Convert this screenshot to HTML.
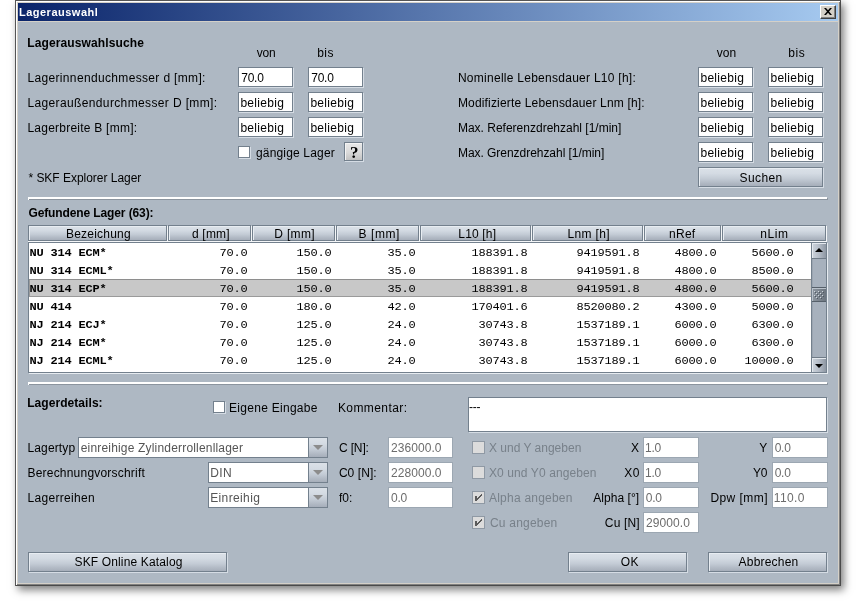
<!DOCTYPE html>
<html lang="de"><head><meta charset="utf-8"><title>Lagerauswahl</title>
<style>
html,body{margin:0;padding:0;background:#fff;}
body{width:856px;height:601px;overflow:hidden;position:relative;font-family:"Liberation Sans",sans-serif;font-size:12px;color:#000;}
#win{position:absolute;left:15px;top:0;width:826px;height:586px;background:#aeb8c3;box-shadow:inset 1px 1px 0 #555,inset -1px -1px 0 #4a4a4a,inset 2px 2px 0 #fff,inset -2px -2px 0 #808080,inset 3px 3px 0 #d4d0c8,inset -3px -3px 0 #d4d0c8,3px 4px 8px rgba(0,0,0,.5);}
#title{position:absolute;left:3px;top:3px;width:820px;height:18px;background:linear-gradient(to right,#0a246a,#a6caf0);border-bottom:1px solid #d4d0c8;}
#close{position:absolute;left:802px;top:2px;width:14px;height:12px;background:#d4d0c8;border:1px solid;border-color:#fff #404040 #404040 #fff;box-shadow:inset -1px -1px 0 #808080;}
#close svg{position:absolute;left:3px;top:2px}
#c{position:absolute;left:0;top:0;width:856px;height:601px;will-change:transform}
.t{position:absolute;line-height:14px;height:14px;white-space:pre;letter-spacing:0.27px}
.bold{font-weight:bold;letter-spacing:0}
.ttl{color:#fff;font-weight:bold;font-size:11px;letter-spacing:0.1px}
.sm{font-size:11px}
.m{font-family:"Liberation Mono",monospace;letter-spacing:-0.2px;transform:scaleY(0.87);transform-origin:0 9.5px}
.mb{font-weight:bold}
.f{position:absolute;background:#fff;border:1px solid #73808d;box-shadow:1px 1px 0 #d5dce4;}
.fd{border-color:#9ca7b2;box-shadow:none}
.b{position:absolute;border:1px solid #73808d;box-shadow:1px 1px 0 #d5dce4, inset 1px 1px 0 #e8edf2;background:linear-gradient(to bottom,#dbe1e8 0%,#d4dbe3 30%,#c3cbd5 60%,#b0b8c3 85%,#a6aeba 100%);}
.q{font-family:"Liberation Serif",serif;font-weight:bold;font-size:17px;letter-spacing:0}
.bq{background:linear-gradient(to bottom,#e9e9e9,#dadada 55%,#c3c3c3);box-shadow:1px 1px 0 #d5dce4, inset 1px 1px 0 #f4f4f4}
.cb{position:absolute;width:10px;height:10px;background:#fff;border:1px solid #73808d;box-shadow:1px 1px 0 #d5dce4;}
.cb.dis{background:#dcdcdc;border-color:#8f99a4;width:11px;height:11px;box-shadow:none}
.cb svg{position:absolute;left:-1px;top:-1px}
.sep{position:absolute;left:28px;width:799px;height:3px;background:#fff}
.sep:after{content:"";position:absolute;left:1px;top:2px;width:799px;height:1px;background:#8b949e}
.sep:before{content:"";position:absolute;left:799px;top:1px;width:1px;height:2px;background:#8b949e}
.combo{box-shadow:none}
.arrow{position:absolute;right:0;top:0;bottom:0;width:18px;border-left:1px solid #73808d;background:linear-gradient(to bottom,#dbe1e8 0%,#d4dbe3 30%,#c3cbd5 60%,#b0b8c3 85%,#a6aeba 100%)}
.arrow svg{position:absolute;left:4px;top:7px}
#sp{position:absolute;left:28px;top:242px;width:797px;height:129px;border:1px solid #73808d;box-shadow:1px 1px 0 #e6ebf0;background:#aeb8c3}
.th{position:absolute;top:225px;height:14px;border:1px solid #73808d;box-shadow:1px 1px 0 #f4f6f8, inset 1px 1px 0 #e8edf2;background:linear-gradient(to bottom,#dbe1e8 0%,#d4dbe3 30%,#c3cbd5 60%,#b0b8c3 85%,#a6aeba 100%)}
#hl{position:absolute;left:28px;top:241px;width:799px;height:1px;background:#f4f6f8}
#tb{position:absolute;left:0;top:0;width:782px;height:129px;background:#fff;overflow:hidden}
.sel{position:absolute;left:0;width:782px;height:18px;background:#c8c8c8;box-shadow:inset 0 1px 0 #8e8e8e, inset 0 -1px 0 #9a9a9a, inset 1px 0 0 #9a9a9a}
#sb{position:absolute;left:782px;top:0;width:14px;height:129px;background:#a7b1bd;border-left:1px solid #73808d;box-shadow:inset 1px 0 0 #9ba5b1}
.sbb{position:absolute;left:0;width:14px;height:14px;background:linear-gradient(to right,#cdd4dc,#b4bcc7 50%,#8e97a3);box-shadow:inset 1px 1px 0 #e4e9ee}
.sbb svg{position:absolute;left:3px}
.up{top:0;height:15px;border-bottom:1px solid #6f7b87}.up svg{top:5px}
.down{bottom:0;border-top:1px solid #6f7b87}.down svg{top:6px}
.thumb{position:absolute;left:0;top:44px;width:14px;height:13px;background:linear-gradient(to right,#8d96a0,#6c757f);border-top:1px solid #56606a;border-bottom:1px solid #56606a;box-shadow:inset 1px 1px 0 #b9c1ca}
.thumb svg{position:absolute;left:-1px;top:-1px}
</style></head>
<body>
<div id="win">
<div id="title"><div id="close"><svg width="8" height="7" viewBox="0 0 8 7"><line x1="0.14" y1="-1" x2="7.86" y2="8" stroke="#000" stroke-width="1.55"/><line x1="7.86" y1="-1" x2="0.14" y2="8" stroke="#000" stroke-width="1.55"/></svg></div></div>
</div>
<div id="c">
<div id="t1" class="t ttl" style="left:18.95px;top:5px;letter-spacing:0.5px;">Lagerauswahl</div>
<div id="t2" class="t bold" style="left:27.2px;top:36px;letter-spacing:0.125px;">Lagerauswahlsuche</div>
<div id="t3" class="t " style="left:256.7px;top:46px;letter-spacing:-0.125px;">von</div>
<div id="t4" class="t " style="left:317.15px;top:46px;letter-spacing:0.55px;">bis</div>
<div id="t5" class="t " style="left:716.8px;top:46px;letter-spacing:0.0px;">von</div>
<div id="t6" class="t " style="left:788.35px;top:46px;letter-spacing:0.55px;">bis</div>
<div id="t7" class="t " style="left:27.45px;top:71px;letter-spacing:0.343px;">Lagerinnenduchmesser d [mm]:</div>
<div class="f " style="left:238px;top:67px;width:53px;height:18px"></div>
<div class="f " style="left:308px;top:67px;width:53px;height:18px"></div>
<div id="t8" class="t " style="left:241.28px;top:71px;letter-spacing:-0.25px;">70.0</div>
<div id="t9" class="t " style="left:311.28px;top:71px;letter-spacing:-0.25px;">70.0</div>
<div id="t10" class="t " style="left:27.45px;top:96px;letter-spacing:0.366px;">Lagerau&szlig;endurchmesser D [mm]:</div>
<div class="f " style="left:238px;top:92px;width:53px;height:18px"></div>
<div class="f " style="left:308px;top:92px;width:53px;height:18px"></div>
<div id="t11" class="t " style="left:240.4px;top:96px;letter-spacing:0.3px;">beliebig</div>
<div id="t12" class="t " style="left:310.4px;top:96px;letter-spacing:0.3px;">beliebig</div>
<div id="t13" class="t " style="left:27.45px;top:121px;letter-spacing:0.236px;">Lagerbreite B [mm]:</div>
<div class="f " style="left:238px;top:117px;width:53px;height:18px"></div>
<div class="f " style="left:308px;top:117px;width:53px;height:18px"></div>
<div id="t14" class="t " style="left:240.4px;top:121px;letter-spacing:0.3px;">beliebig</div>
<div id="t15" class="t " style="left:310.4px;top:121px;letter-spacing:0.3px;">beliebig</div>
<div id="t16" class="t " style="left:457.95px;top:71px;letter-spacing:0.267px;">Nominelle Lebensdauer L10 [h]:</div>
<div class="f " style="left:698px;top:67px;width:53px;height:18px"></div>
<div class="f " style="left:768px;top:67px;width:53px;height:18px"></div>
<div id="t17" class="t " style="left:700.4px;top:71px;letter-spacing:0.314px;">beliebig</div>
<div id="t18" class="t " style="left:770.4px;top:71px;letter-spacing:0.314px;">beliebig</div>
<div id="t19" class="t " style="left:457.95px;top:96px;letter-spacing:0.164px;">Modifizierte Lebensdauer Lnm [h]:</div>
<div class="f " style="left:698px;top:92px;width:53px;height:18px"></div>
<div class="f " style="left:768px;top:92px;width:53px;height:18px"></div>
<div id="t20" class="t " style="left:700.4px;top:96px;letter-spacing:0.314px;">beliebig</div>
<div id="t21" class="t " style="left:770.4px;top:96px;letter-spacing:0.314px;">beliebig</div>
<div id="t22" class="t " style="left:457.95px;top:121px;letter-spacing:0.0px;">Max. Referenzdrehzahl [1/min]</div>
<div class="f " style="left:698px;top:117px;width:53px;height:18px"></div>
<div class="f " style="left:768px;top:117px;width:53px;height:18px"></div>
<div id="t23" class="t " style="left:700.4px;top:121px;letter-spacing:0.314px;">beliebig</div>
<div id="t24" class="t " style="left:770.4px;top:121px;letter-spacing:0.314px;">beliebig</div>
<div id="t25" class="t " style="left:457.95px;top:146px;letter-spacing:-0.04px;">Max. Grenzdrehzahl [1/min]</div>
<div class="f " style="left:698px;top:142px;width:53px;height:18px"></div>
<div class="f " style="left:768px;top:142px;width:53px;height:18px"></div>
<div id="t26" class="t " style="left:700.4px;top:146px;letter-spacing:0.314px;">beliebig</div>
<div id="t27" class="t " style="left:770.4px;top:146px;letter-spacing:0.314px;">beliebig</div>
<div class="cb" style="left:238px;top:146px"></div>
<div id="t28" class="t " style="left:255.95px;top:146px;letter-spacing:0.171px;">g&auml;ngige Lager</div>
<div class="b bq" style="left:344px;top:142px;width:17px;height:17px"></div>
<div id="t29" class="t q" style="left:350.05px;top:145.5px;letter-spacing:0.0px;">?</div>
<div id="t30" class="t " style="left:28.45px;top:171px;letter-spacing:-0.026px;">* SKF Explorer Lager</div>
<div class="b " style="left:698px;top:167px;width:123px;height:18px"></div>
<div id="t31" class="t " style="left:739.5px;top:171px;letter-spacing:0.4px;">Suchen</div>
<div class="sep" style="top:197px"></div>
<div id="t32" class="t bold" style="left:28.45px;top:206px;letter-spacing:-0.113px;">Gefundene Lager (63):</div>
<div class="th" style="left:28px;width:137px"></div>
<div class="th" style="left:168px;width:81px"></div>
<div class="th" style="left:252px;width:81px"></div>
<div class="th" style="left:336px;width:81px"></div>
<div class="th" style="left:420px;width:109px"></div>
<div class="th" style="left:532px;width:109px"></div>
<div class="th" style="left:644px;width:75px"></div>
<div class="th" style="left:722px;width:102px"></div>
<div id="hl"></div>
<div id="sp">
<div id="tb"><div class="sel" style="top:36px"></div></div>
<div id="sb"><div class="sbb up"><svg width="8" height="4" viewBox="0 0 8 4"><path d="M0 4H8L4 0Z" fill="#000"/></svg></div><div class="thumb"><svg width="15" height="15" viewBox="0 0 15 15"><rect x="3" y="4" width="1" height="1" fill="#cfd6dd"/><rect x="4" y="5" width="1" height="1" fill="#4f5862"/><rect x="7" y="4" width="1" height="1" fill="#cfd6dd"/><rect x="8" y="5" width="1" height="1" fill="#4f5862"/><rect x="11" y="4" width="1" height="1" fill="#cfd6dd"/><rect x="12" y="5" width="1" height="1" fill="#4f5862"/><rect x="5" y="6" width="1" height="1" fill="#cfd6dd"/><rect x="6" y="7" width="1" height="1" fill="#4f5862"/><rect x="9" y="6" width="1" height="1" fill="#cfd6dd"/><rect x="10" y="7" width="1" height="1" fill="#4f5862"/><rect x="3" y="8" width="1" height="1" fill="#cfd6dd"/><rect x="4" y="9" width="1" height="1" fill="#4f5862"/><rect x="7" y="8" width="1" height="1" fill="#cfd6dd"/><rect x="8" y="9" width="1" height="1" fill="#4f5862"/><rect x="11" y="8" width="1" height="1" fill="#cfd6dd"/><rect x="12" y="9" width="1" height="1" fill="#4f5862"/><rect x="5" y="10" width="1" height="1" fill="#cfd6dd"/><rect x="6" y="11" width="1" height="1" fill="#4f5862"/><rect x="9" y="10" width="1" height="1" fill="#cfd6dd"/><rect x="10" y="11" width="1" height="1" fill="#4f5862"/></svg></div><div class="sbb down"><svg width="8" height="4" viewBox="0 0 8 4"><path d="M0 0H8L4 4Z" fill="#000"/></svg></div></div>
</div>
<div id="t33" class="t " style="left:65.95px;top:227px;letter-spacing:0.222px;">Bezeichung</div>
<div id="t34" class="t " style="left:191.95px;top:227px;letter-spacing:0.2px;">d [mm]</div>
<div id="t35" class="t " style="left:274.3px;top:227px;letter-spacing:0.32px;">D [mm]</div>
<div id="t36" class="t " style="left:358.57px;top:227px;letter-spacing:0.55px;">B [mm]</div>
<div id="t37" class="t " style="left:458.3px;top:227px;letter-spacing:0.167px;">L10 [h]</div>
<div id="t38" class="t " style="left:567.5px;top:227px;letter-spacing:0.333px;">Lnm [h]</div>
<div id="t39" class="t " style="left:669.1px;top:227px;letter-spacing:0.233px;">nRef</div>
<div id="t40" class="t " style="left:760.32px;top:227px;letter-spacing:0.55px;">nLim</div>
<div class="t m mb" style="left:29.5px;top:246px">NU 314 ECM*</div>
<div class="t m" style="left:219.5px;top:246px">70.0</div>
<div class="t m" style="left:296.5px;top:246px">150.0</div>
<div class="t m" style="left:387.5px;top:246px">35.0</div>
<div class="t m" style="left:471.5px;top:246px">188391.8</div>
<div class="t m" style="left:576.5px;top:246px">9419591.8</div>
<div class="t m" style="left:674.5px;top:246px">4800.0</div>
<div class="t m" style="left:751.5px;top:246px">5600.0</div>
<div class="t m mb" style="left:29.5px;top:264px">NU 314 ECML*</div>
<div class="t m" style="left:219.5px;top:264px">70.0</div>
<div class="t m" style="left:296.5px;top:264px">150.0</div>
<div class="t m" style="left:387.5px;top:264px">35.0</div>
<div class="t m" style="left:471.5px;top:264px">188391.8</div>
<div class="t m" style="left:576.5px;top:264px">9419591.8</div>
<div class="t m" style="left:674.5px;top:264px">4800.0</div>
<div class="t m" style="left:751.5px;top:264px">8500.0</div>
<div class="t m mb" style="left:29.5px;top:282px">NU 314 ECP*</div>
<div class="t m" style="left:219.5px;top:282px">70.0</div>
<div class="t m" style="left:296.5px;top:282px">150.0</div>
<div class="t m" style="left:387.5px;top:282px">35.0</div>
<div class="t m" style="left:471.5px;top:282px">188391.8</div>
<div class="t m" style="left:576.5px;top:282px">9419591.8</div>
<div class="t m" style="left:674.5px;top:282px">4800.0</div>
<div class="t m" style="left:751.5px;top:282px">5600.0</div>
<div class="t m mb" style="left:29.5px;top:300px">NU 414</div>
<div class="t m" style="left:219.5px;top:300px">70.0</div>
<div class="t m" style="left:296.5px;top:300px">180.0</div>
<div class="t m" style="left:387.5px;top:300px">42.0</div>
<div class="t m" style="left:471.5px;top:300px">170401.6</div>
<div class="t m" style="left:576.5px;top:300px">8520080.2</div>
<div class="t m" style="left:674.5px;top:300px">4300.0</div>
<div class="t m" style="left:751.5px;top:300px">5000.0</div>
<div class="t m mb" style="left:29.5px;top:318px">NJ 214 ECJ*</div>
<div class="t m" style="left:219.5px;top:318px">70.0</div>
<div class="t m" style="left:296.5px;top:318px">125.0</div>
<div class="t m" style="left:387.5px;top:318px">24.0</div>
<div class="t m" style="left:478.5px;top:318px">30743.8</div>
<div class="t m" style="left:576.5px;top:318px">1537189.1</div>
<div class="t m" style="left:674.5px;top:318px">6000.0</div>
<div class="t m" style="left:751.5px;top:318px">6300.0</div>
<div class="t m mb" style="left:29.5px;top:336px">NJ 214 ECM*</div>
<div class="t m" style="left:219.5px;top:336px">70.0</div>
<div class="t m" style="left:296.5px;top:336px">125.0</div>
<div class="t m" style="left:387.5px;top:336px">24.0</div>
<div class="t m" style="left:478.5px;top:336px">30743.8</div>
<div class="t m" style="left:576.5px;top:336px">1537189.1</div>
<div class="t m" style="left:674.5px;top:336px">6000.0</div>
<div class="t m" style="left:751.5px;top:336px">6300.0</div>
<div class="t m mb" style="left:29.5px;top:354px">NJ 214 ECML*</div>
<div class="t m" style="left:219.5px;top:354px">70.0</div>
<div class="t m" style="left:296.5px;top:354px">125.0</div>
<div class="t m" style="left:387.5px;top:354px">24.0</div>
<div class="t m" style="left:478.5px;top:354px">30743.8</div>
<div class="t m" style="left:576.5px;top:354px">1537189.1</div>
<div class="t m" style="left:674.5px;top:354px">6000.0</div>
<div class="t m" style="left:744.5px;top:354px">10000.0</div>
<div class="sep" style="top:382px"></div>
<div id="t41" class="t bold" style="left:27.2px;top:396px;letter-spacing:0.062px;">Lagerdetails:</div>
<div class="cb" style="left:213px;top:401px"></div>
<div id="t42" class="t " style="left:229.1px;top:401px;letter-spacing:0.277px;">Eigene Eingabe</div>
<div id="t43" class="t " style="left:337.9px;top:401px;letter-spacing:0.422px;">Kommentar:</div>
<div class="f ta" style="left:468px;top:397px;width:357px;height:33px"></div>
<div id="t44" class="t " style="left:468.95px;top:400px;letter-spacing:-0.25px;">---</div>
<div id="t45" class="t " style="left:27.45px;top:441px;letter-spacing:0.143px;">Lagertyp</div>
<div class="f combo" style="left:78px;top:437px;width:248px;height:19px"><div class="arrow"><svg width="10" height="5" viewBox="0 0 10 5"><path d="M0 0H10L5 5Z" fill="#8c8c8c"/></svg></div></div>
<div id="t46" class="t " style="left:80.7px;top:441px;letter-spacing:0.183px;color:#555555;">einreihige Zylinderrollenllager</div>
<div id="t47" class="t " style="left:27.45px;top:466px;letter-spacing:0.211px;">Berechnungvorschrift</div>
<div class="f combo" style="left:208px;top:462px;width:118px;height:19px"><div class="arrow"><svg width="10" height="5" viewBox="0 0 10 5"><path d="M0 0H10L5 5Z" fill="#8c8c8c"/></svg></div></div>
<div id="t48" class="t " style="left:210.2px;top:466px;letter-spacing:0.4px;color:#555555;">DIN</div>
<div id="t49" class="t " style="left:27.45px;top:491px;letter-spacing:0.325px;">Lagerreihen</div>
<div class="f combo" style="left:208px;top:487px;width:118px;height:19px"><div class="arrow"><svg width="10" height="5" viewBox="0 0 10 5"><path d="M0 0H10L5 5Z" fill="#8c8c8c"/></svg></div></div>
<div id="t50" class="t " style="left:210.2px;top:491px;letter-spacing:0.375px;color:#555555;">Einreihig</div>
<div id="t51" class="t " style="left:338.9px;top:441px;letter-spacing:-0.12px;">C [N]:</div>
<div class="f fd" style="left:388px;top:437px;width:63px;height:19px"></div>
<div id="t52" class="t " style="left:391.1px;top:441px;letter-spacing:0.057px;color:#6c6c6c;">236000.0</div>
<div id="t53" class="t " style="left:338.9px;top:466px;letter-spacing:0.067px;">C0 [N]:</div>
<div class="f fd" style="left:388px;top:462px;width:63px;height:19px"></div>
<div id="t54" class="t " style="left:391.1px;top:466px;letter-spacing:0.057px;color:#6c6c6c;">228000.0</div>
<div id="t55" class="t " style="left:338.9px;top:491px;letter-spacing:0.05px;">f0:</div>
<div class="f fd" style="left:388px;top:487px;width:63px;height:19px"></div>
<div id="t56" class="t " style="left:391.1px;top:491px;letter-spacing:-0.25px;color:#6c6c6c;">0.0</div>
<div class="cb dis" style="left:472px;top:441px"></div>
<div id="t57" class="t " style="left:489.0px;top:441px;letter-spacing:-0.0px;color:#78818a;">X und Y angeben</div>
<div id="t58" class="t " style="left:630.95px;top:441px;letter-spacing:0.0px;">X</div>
<div class="f fd" style="left:643px;top:437px;width:54px;height:19px"></div>
<div id="t59" class="t " style="left:645.0px;top:441px;letter-spacing:-0.2px;color:#6c6c6c;">1.0</div>
<div class="cb dis" style="left:472px;top:466px"></div>
<div id="t60" class="t " style="left:489.0px;top:466px;letter-spacing:0.1px;color:#78818a;">X0 und Y0 angeben</div>
<div id="t61" class="t " style="left:624.2px;top:466px;letter-spacing:0.5px;">X0</div>
<div class="f fd" style="left:643px;top:462px;width:54px;height:19px"></div>
<div id="t62" class="t " style="left:645.0px;top:466px;letter-spacing:-0.2px;color:#6c6c6c;">1.0</div>
<div class="cb dis" style="left:472px;top:491px"><svg width="13" height="13" viewBox="0 0 13 13" shape-rendering="crispEdges" fill="#5a5a5a"><rect x="3" y="5" width="2" height="5"/><rect x="5" y="7" width="1" height="2"/><rect x="6" y="6" width="1" height="2"/><rect x="7" y="5" width="1" height="2"/><rect x="8" y="4" width="1" height="2"/><rect x="9" y="3" width="1" height="2"/></svg></div>
<div id="t63" class="t " style="left:489.0px;top:491px;letter-spacing:0.225px;color:#78818a;">Alpha angeben</div>
<div id="t64" class="t " style="left:593.3px;top:491px;letter-spacing:0.05px;">Alpha [&deg;]</div>
<div class="f fd" style="left:643px;top:487px;width:54px;height:19px"></div>
<div id="t65" class="t " style="left:645.85px;top:491px;letter-spacing:-0.25px;color:#6c6c6c;">0.0</div>
<div class="cb dis" style="left:472px;top:516px"><svg width="13" height="13" viewBox="0 0 13 13" shape-rendering="crispEdges" fill="#5a5a5a"><rect x="3" y="5" width="2" height="5"/><rect x="5" y="7" width="1" height="2"/><rect x="6" y="6" width="1" height="2"/><rect x="7" y="5" width="1" height="2"/><rect x="8" y="4" width="1" height="2"/><rect x="9" y="3" width="1" height="2"/></svg></div>
<div id="t66" class="t " style="left:489.9px;top:516px;letter-spacing:0.222px;color:#78818a;">Cu angeben</div>
<div id="t67" class="t " style="left:604.8px;top:516px;letter-spacing:0.18px;">Cu [N]</div>
<div class="f fd" style="left:643px;top:512px;width:54px;height:19px"></div>
<div id="t68" class="t " style="left:646.0px;top:516px;letter-spacing:0.083px;color:#6c6c6c;">29000.0</div>
<div id="t69" class="t " style="left:759.3px;top:441px;letter-spacing:0.0px;">Y</div>
<div class="f fd" style="left:772px;top:437px;width:54px;height:19px"></div>
<div id="t70" class="t " style="left:774.65px;top:441px;letter-spacing:-0.25px;color:#6c6c6c;">0.0</div>
<div id="t71" class="t " style="left:753.02px;top:466px;letter-spacing:-0.25px;">Y0</div>
<div class="f fd" style="left:772px;top:462px;width:54px;height:19px"></div>
<div id="t72" class="t " style="left:774.65px;top:466px;letter-spacing:-0.25px;color:#6c6c6c;">0.0</div>
<div id="t73" class="t " style="left:710.4px;top:491px;letter-spacing:0.443px;">Dpw [mm]</div>
<div class="f fd" style="left:772px;top:487px;width:54px;height:19px"></div>
<div id="t74" class="t " style="left:773.8px;top:491px;letter-spacing:0.35px;color:#6c6c6c;">110.0</div>
<div class="b " style="left:28px;top:552px;width:197px;height:18px"></div>
<div id="t75" class="t " style="left:74.5px;top:555px;letter-spacing:0.147px;">SKF Online Katalog</div>
<div class="b " style="left:568px;top:552px;width:117px;height:18px"></div>
<div id="t76" class="t " style="left:620.7px;top:555px;letter-spacing:0.4px;">OK</div>
<div class="b " style="left:708px;top:552px;width:117px;height:18px"></div>
<div id="t77" class="t " style="left:738.6px;top:555px;letter-spacing:0.2px;">Abbrechen</div>
</div>
</body></html>
